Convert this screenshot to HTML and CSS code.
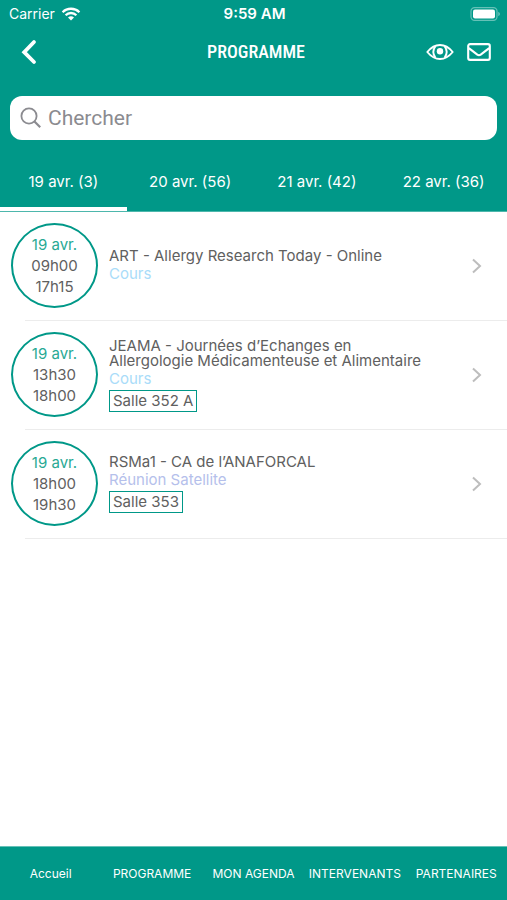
FILE: index.html
```html
<!DOCTYPE html>
<html lang="fr">
<head>
<meta charset="utf-8">
<meta name="viewport" content="width=device-width, initial-scale=1">
<title>Programme</title>
<link rel="stylesheet" href="styles.css">
</head>
<body>
<header class="header">
  <div class="status">
    <span class="carrier">Carrier
      <svg width="20" height="14" viewBox="0 0 20 14" fill="none" stroke="currentColor" stroke-width="2.3" aria-hidden="true"><path d="M1.6 5.2a12 12 0 0 1 16.8 0M4.6 8.2a7.7 7.7 0 0 1 10.8 0"/><path d="M7 10.6a4.3 4.3 0 0 1 6 0l-3 3z" fill="currentColor" stroke="none"/></svg>
    </span>
    <span class="clock">9:59 AM</span>
    <svg class="battery" width="30" height="14" viewBox="0 0 30 14" aria-hidden="true"><rect x="1" y=".6" width="26" height="12.8" rx="3.6" fill="none" stroke="#fff" stroke-opacity=".4" stroke-width="1.2"/><rect x="3" y="2.400" width="22" height="9.200" rx="2" fill="#fff"/><path d="M28.4 4.8v4.4q1.4-.7 1.4-2.2t-1.4-2.2" fill="#fff" fill-opacity=".5"/></svg>
  </div>
  <div class="navbar">
    <button class="icon-button back" aria-label="Retour"><svg width="16" height="26" viewBox="0 0 16 26" fill="none" stroke="currentColor" stroke-width="3.8" stroke-linecap="round" stroke-linejoin="miter"><path d="M13 3 3.2 13.2 13 23"/></svg></button>
    <h1 class="title">PROGRAMME</h1>
    <div class="actions">
      <button class="icon-button" aria-label="Affichage"><svg width="28" height="18" viewBox="0 0 28 18" fill="none" stroke="currentColor" stroke-width="1.9"><path d="M1.3 9Q7 2 14 2t12.7 7Q21 16 14 16T1.3 9z" stroke-linejoin="round"/><path d="M9.4 3.3q-4.2 5.7 0 11.4M18.6 3.3q4.2 5.7 0 11.4"/><circle cx="14" cy="8.3" r="3.2" fill="currentColor" stroke="none"/></svg></button>
      <button class="icon-button" aria-label="Messages"><svg width="24" height="18" viewBox="0 0 24 18" fill="none" stroke="currentColor" stroke-width="2.1" stroke-linejoin="round"><rect x="1.2" y="1.1" width="21.6" height="15.8" rx="1.8"/><path d="m1.8 5.2 8.500 6.500q1.700 1.200 3.400 0l8.500-6.500"/></svg></button>
    </div>
  </div>
  <label class="search">
    <svg width="22" height="22" viewBox="0 0 22 22" fill="none" stroke="currentColor" stroke-width="1.8" aria-hidden="true"><circle cx="9" cy="9" r="7.6"/><path d="m14.5 14.5 5.7 5.7" stroke-width="2.2"/></svg>
    <input class="search-input" type="search" placeholder="Chercher" aria-label="Chercher">
  </label>
  <nav class="tabs" aria-label="Jours">
    <button class="tab active">19 avr. (3)</button>
    <button class="tab">20 avr. (56)</button>
    <button class="tab">21 avr. (42)</button>
    <button class="tab">22 avr. (36)</button>
  </nav>
</header>
<main class="sessions">
  <a class="session" href="#art">
    <div class="time"><span class="day">19 avr.</span><span>09h00</span><span>17h15</span></div>
    <div class="details">
      <h2 class="name">ART - Allergy Research Today - Online</h2>
      <p class="kind">Cours</p>
    </div>
    <svg class="chevron" width="12" height="16" viewBox="0 0 12 16" aria-hidden="true"><path d="m2 1.5 7 6.5-7 6.5"/></svg>
  </a>
  <a class="session" href="#jeama">
    <div class="time"><span class="day">19 avr.</span><span>13h30</span><span>18h00</span></div>
    <div class="details">
      <h2 class="name">JEAMA - Journées d’Echanges en Allergologie Médicamenteuse et Alimentaire</h2>
      <p class="kind">Cours</p>
      <p class="room">Salle 352 A</p>
    </div>
    <svg class="chevron" width="12" height="16" viewBox="0 0 12 16" aria-hidden="true"><path d="m2 1.5 7 6.5-7 6.5"/></svg>
  </a>
  <a class="session" href="#rsma1">
    <div class="time"><span class="day">19 avr.</span><span>18h00</span><span>19h30</span></div>
    <div class="details">
      <h2 class="name">RSMa1 - CA de l’ANAFORCAL</h2>
      <p class="kind satellite">Réunion Satellite</p>
      <p class="room">Salle 353</p>
    </div>
    <svg class="chevron" width="12" height="16" viewBox="0 0 12 16" aria-hidden="true"><path d="m2 1.5 7 6.5-7 6.5"/></svg>
  </a>
</main>
<nav class="bottom" aria-label="Navigation principale">
  <a href="#accueil">Accueil</a>
  <a href="#programme">PROGRAMME</a>
  <a href="#agenda">MON AGENDA</a>
  <a href="#intervenants">INTERVENANTS</a>
  <a href="#partenaires">PARTENAIRES</a>
</nav>
</body>
</html>
```
FILE: styles.css
```css
* { box-sizing: border-box; }

body {
  margin: 0;
  min-height: 100vh;
  display: flex;
  flex-direction: column;
  background: #fff;
  color: #606060;
  font: 15px/18px Inter, "Open Sans", sans-serif;
}

button {
  padding: 0;
  border: 0;
  background: none;
  color: inherit;
  font: inherit;
}

svg { display: block; flex: none; }

.header { background: #009888; color: #fff; }

.status {
  display: grid;
  grid-template-columns: 1fr auto 1fr;
  align-items: center;
  height: 28px;
  padding: 0 7px 0 9px;
  font-size: 14px;
}

.carrier { display: flex; align-items: center; gap: 6px; }
.clock { font-size: 15px; font-weight: 600; }
.battery { justify-self: end; }

.navbar {
  display: grid;
  grid-template-columns: 1fr auto 1fr;
  align-items: center;
  height: 48px;
  padding: 0 16px 0 21px;
}

.icon-button { display: flex; }
.back { justify-self: start; }

.title {
  margin: 0;
  font: 500 18px/24px "Roboto Condensed", "Liberation Sans Narrow", Roboto, sans-serif;
}

.actions { display: flex; align-items: center; justify-content: flex-end; gap: 13px; }

.search {
  display: flex;
  align-items: center;
  gap: 6px;
  height: 44px;
  margin: 20px 10px 0;
  padding: 0 10px;
  border-radius: 12px;
  background: #fff;
  color: #8b8b90;
}

.search-input {
  flex: 1;
  min-width: 0;
  padding: 0;
  border: 0;
  outline: 0;
  background: none;
  color: #606060;
  font: 21px/28px Roboto, sans-serif;
}

.search-input::placeholder { color: #8b8b90; opacity: 1; }

.tabs {
  display: grid;
  grid-template-columns: repeat(4, 1fr);
  height: 72px;
  padding-top: 16px;
  border-bottom: 1px solid #4db7ac;
}

.tab { border-bottom: 4px solid transparent; }
.active { border-color: #fff; }

.sessions { flex: 1; }

.session {
  display: flex;
  align-items: center;
  gap: 11px;
  min-height: 109px;
  padding: 0 24px 2px 11px;
  background: linear-gradient(#ececec, #ececec) 25px 100% / 100% 1px no-repeat;
  color: inherit;
  text-decoration: none;
}

.time {
  display: flex;
  flex: none;
  flex-direction: column;
  justify-content: center;
  width: 87px;
  height: 85px;
  border: 2px solid #009888;
  border-radius: 50%;
  line-height: 21px;
  text-align: center;
}

.day { color: #28a994; }

.details { flex: 1; min-width: 0; padding-right: 24px; }

.name {
  margin: 0;
  font-size: 15px;
  font-weight: 400;
  line-height: 15px;
}

.kind { margin: 2px 0 0; color: #a9dcf9; }
.satellite { color: #b5c0eb; }

.room {
  width: fit-content;
  margin: 2px 0 0;
  padding: 1px 3px;
  border: 1px solid #009888;
}

.chevron {
  fill: none;
  stroke: #bdbdbd;
  stroke-width: 2;
}

.bottom {
  display: grid;
  grid-template-columns: repeat(5, 1fr);
  align-items: center;
  height: 54px;
  border-top: 1px solid #66c1b8;
  background: #009888;
  font-size: 12px;
  text-align: center;
}

.bottom a { color: #fff; text-decoration: none; }
```
